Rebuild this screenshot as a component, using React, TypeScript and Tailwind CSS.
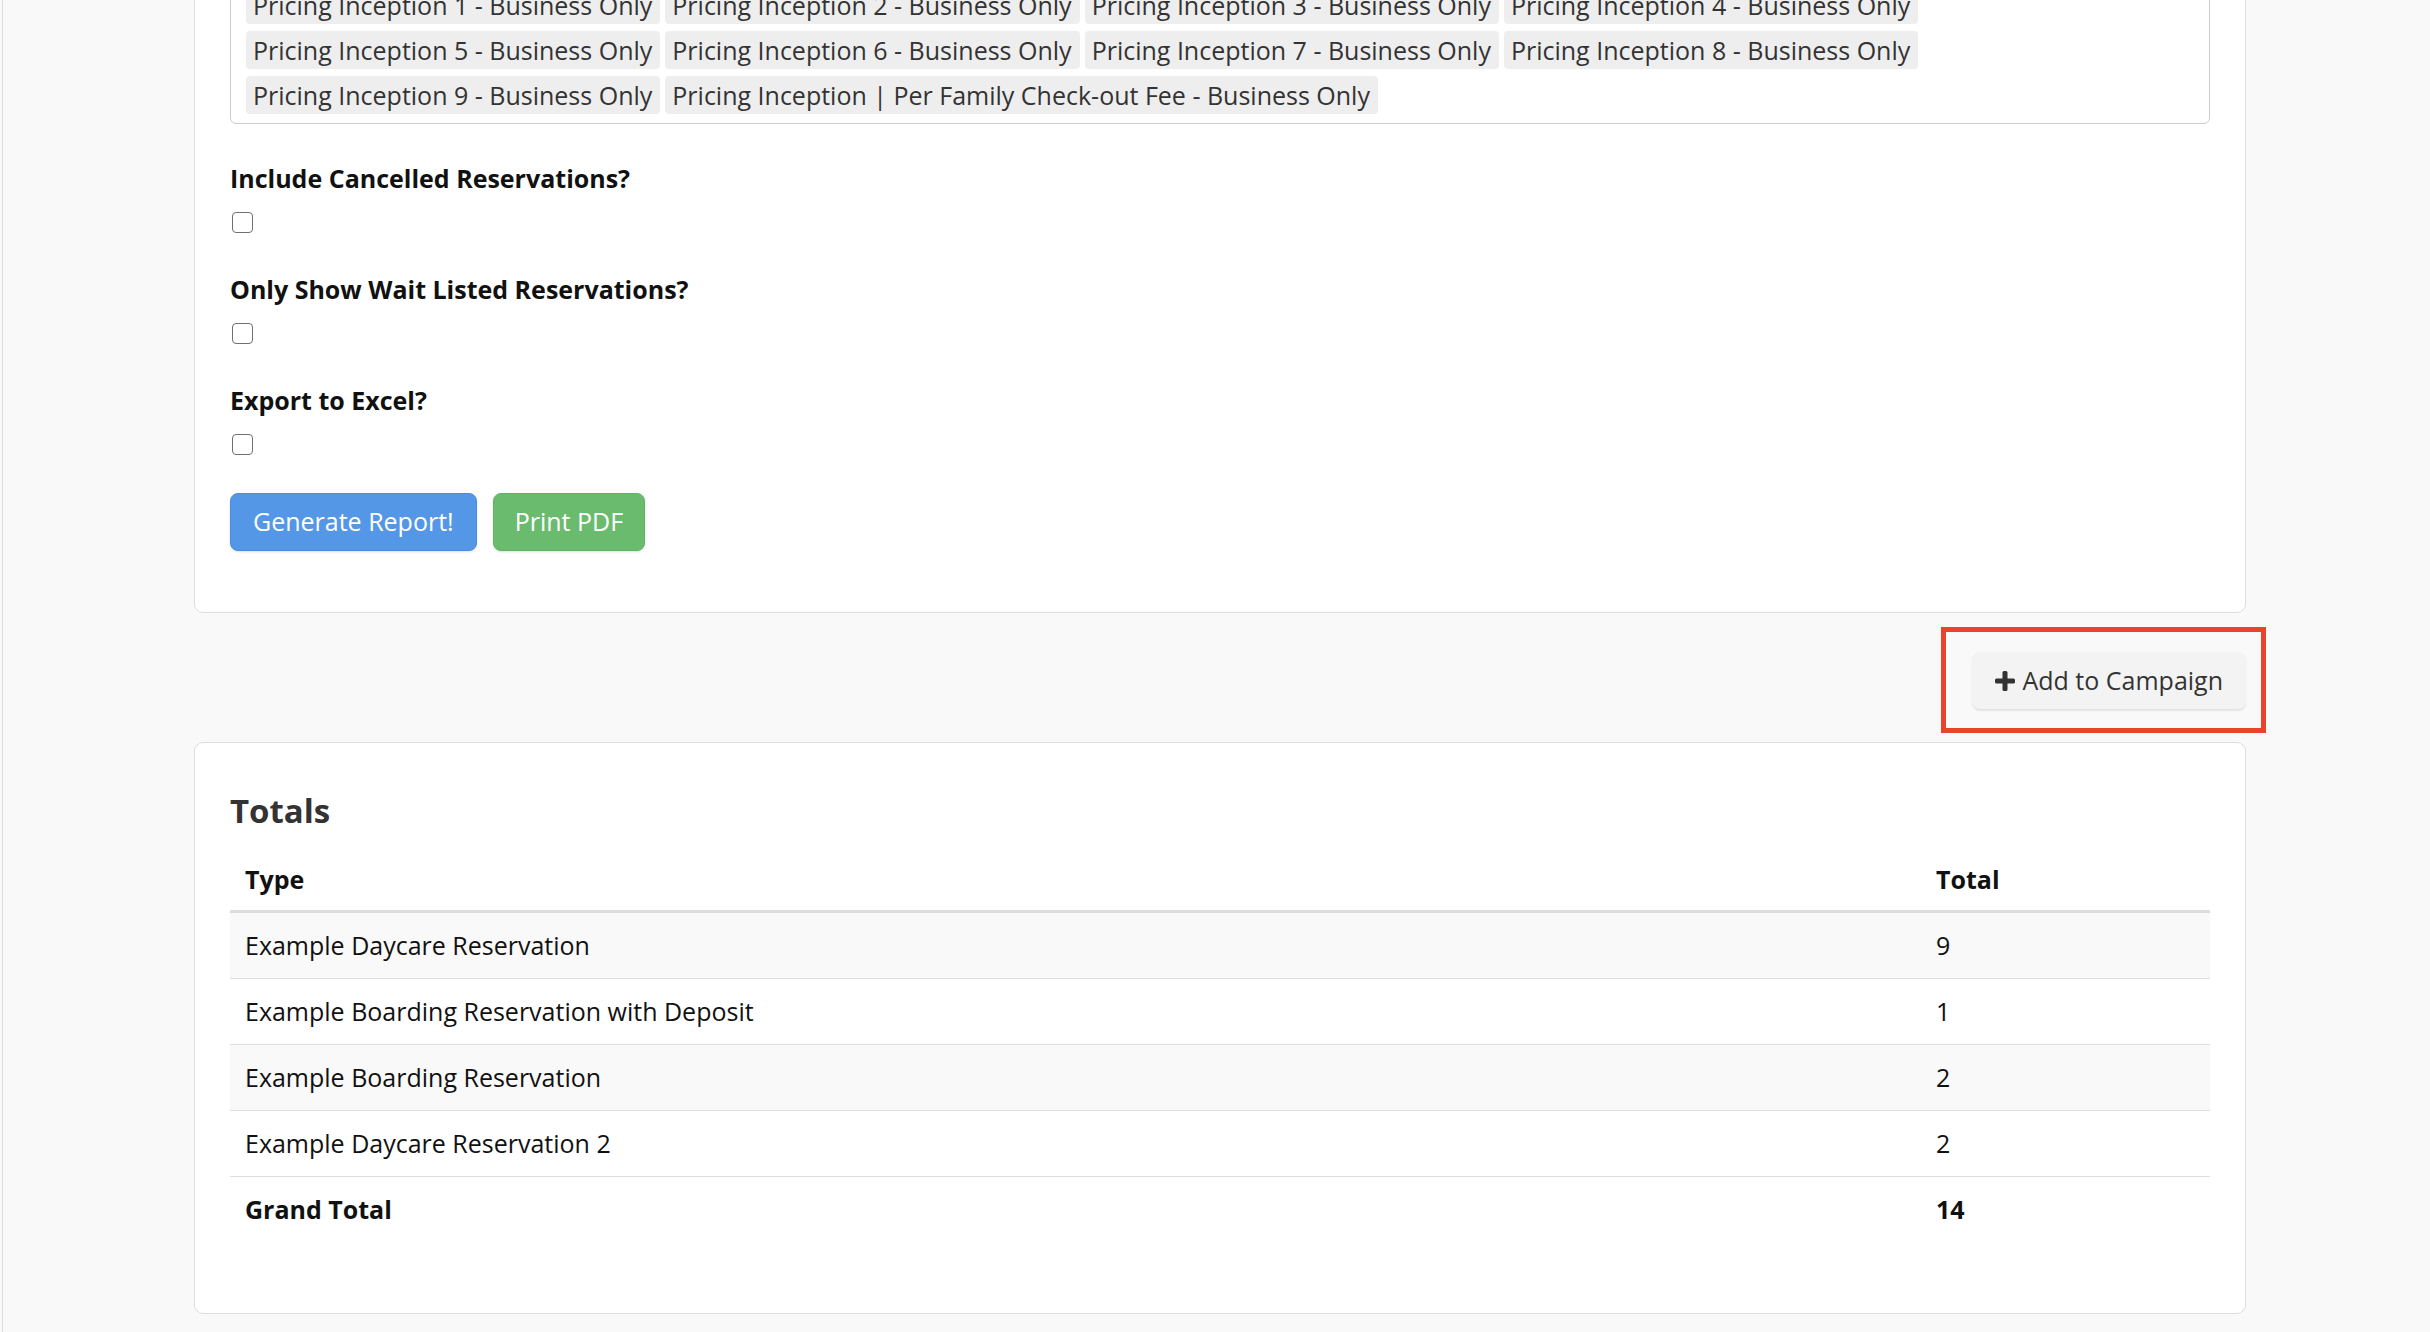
const PRICING_TAGS = [
  "Pricing Inception 1 - Business Only",
  "Pricing Inception 2 - Business Only",
  "Pricing Inception 3 - Business Only",
  "Pricing Inception 4 - Business Only",
  "Pricing Inception 5 - Business Only",
  "Pricing Inception 6 - Business Only",
  "Pricing Inception 7 - Business Only",
  "Pricing Inception 8 - Business Only",
  "Pricing Inception 9 - Business Only",
  "Pricing Inception | Per Family Check-out Fee - Business Only",
]

const OPTIONS = [
  "Include Cancelled Reservations?",
  "Only Show Wait Listed Reservations?",
  "Export to Excel?",
]

const TOTALS = [
  { type: "Example Daycare Reservation", total: 9 },
  { type: "Example Boarding Reservation with Deposit", total: 1 },
  { type: "Example Boarding Reservation", total: 2 },
  { type: "Example Daycare Reservation 2", total: 2 },
]

// ─── ReportForm ──────────────────────────────────────────────────────────────

function ReportForm() {
  return (
    <div className="mt-[-60px] bg-white border border-[#dddddd] rounded-[9px] px-[35px] pt-[35px] pb-[61px]">
      {/* selected pricing items */}
      <div className="flex flex-wrap gap-x-[5px] gap-y-[7px] border border-[#cccccc] rounded-[6px] px-[15px] py-[9px]">
        {PRICING_TAGS.map((tag) => (
          <span
            key={tag}
            className="h-[38px] leading-[38px] pl-[7px] pr-[8px] rounded-[4px] bg-[#eeeeee] text-[#333333] text-[25px] whitespace-nowrap"
          >
            {tag}
          </span>
        ))}
      </div>

      <div className="mt-[36px] flex flex-col">
        {OPTIONS.map((label) => (
          <div key={label} className="flex flex-col items-start pb-[38px]">
            <label className="text-[25px] leading-[36px] font-bold text-[#111111]">{label}</label>
            <input
              type="checkbox"
              className="appearance-none mt-[16px] ml-[2px] w-[21px] h-[21px] rounded-[4px] border-[1.5px] border-[#707070] bg-white"
            />
          </div>
        ))}
      </div>

      <div className="flex gap-[16px]">
        <button className="h-[58px] px-[22px] rounded-[8px] bg-[#5597e7] border border-[#4a8ce0] text-white text-[25px] shadow-sm">
          Generate Report!
        </button>
        <button className="h-[58px] px-[21px] rounded-[8px] bg-[#6bbb6f] border border-[#62b266] text-white text-[25px] shadow-sm">
          Print PDF
        </button>
      </div>
    </div>
  )
}

// ─── TotalsTable ─────────────────────────────────────────────────────────────

function TotalsTable() {
  const grand = TOTALS.reduce((s, r) => s + r.total, 0)

  return (
    <div className="bg-white border border-[#dddddd] rounded-[9px] px-[35px] pt-[48px] pb-[71px]">
      <h3 className="text-[33px] leading-[40px] font-bold text-[#333333]">Totals</h3>
      <table className="mt-[20px] w-full table-fixed border-collapse text-[25px] text-[#111111]">
        <colgroup>
          <col />
          <col className="w-[290px]" />
        </colgroup>
        <thead>
          <tr className="border-b-[3px] border-[#dddddd]">
            <th className="text-left font-bold pl-[15px] pr-[16px] pt-[10px] pb-[13px] leading-[36px]">Type</th>
            <th className="text-left font-bold px-[16px] pt-[10px] pb-[13px] leading-[36px]">Total</th>
          </tr>
        </thead>
        <tbody>
          {TOTALS.map((row, i) => (
            <tr
              key={row.type}
              className={i % 2 === 0 ? "bg-[#f9f9f9] border-b border-[#dddddd]" : "bg-white border-b border-[#dddddd]"}
            >
              <td className="pl-[15px] pr-[16px] py-[15px] leading-[35px]">{row.type}</td>
              <td className="px-[16px] py-[15px] leading-[35px]">{row.total}</td>
            </tr>
          ))}
          <tr>
            <td className="pl-[15px] pr-[16px] py-[15px] leading-[35px] font-bold">Grand Total</td>
            <td className="px-[16px] py-[15px] leading-[35px] font-bold">{grand}</td>
          </tr>
        </tbody>
      </table>
    </div>
  )
}

// ─── App ─────────────────────────────────────────────────────────────────────

export default function App() {
  return (
    <div className="h-[1332px] overflow-hidden bg-[#f9f9f9] font-['Open_Sans',sans-serif]">
      <div className="ml-[2px] h-full border-l border-[#dddddd] pl-[191px]">
        <div className="w-[2052px] flex flex-col">
          <ReportForm />

          <div className="mt-[39px] flex justify-end">
            <div className="relative">
              <button className="h-[58px] pl-[22px] pr-[23px] flex items-center gap-[6px] rounded-[8px] bg-[#f3f3f3] border-b border-[#e2e2e2] shadow-[0_1px_2px_rgba(0,0,0,0.08)] text-[25px] text-[#333333]">
                <svg width="22" height="22" viewBox="0 0 22 22" className="shrink-0">
                  <rect x="8.5" y="1" width="5" height="20" rx="1.5" fill="#333333" />
                  <rect x="1" y="8.5" width="20" height="5" rx="1.5" fill="#333333" />
                </svg>
                Add to Campaign
              </button>
              {/* annotation frame */}
              <div className="absolute left-[-31px] right-[-20px] top-[-25px] bottom-[-23px] border-[5px] border-[#e8432b] pointer-events-none" />
            </div>
          </div>

          <div className="mt-[32px]">
            <TotalsTable />
          </div>
        </div>
      </div>
    </div>
  )
}
